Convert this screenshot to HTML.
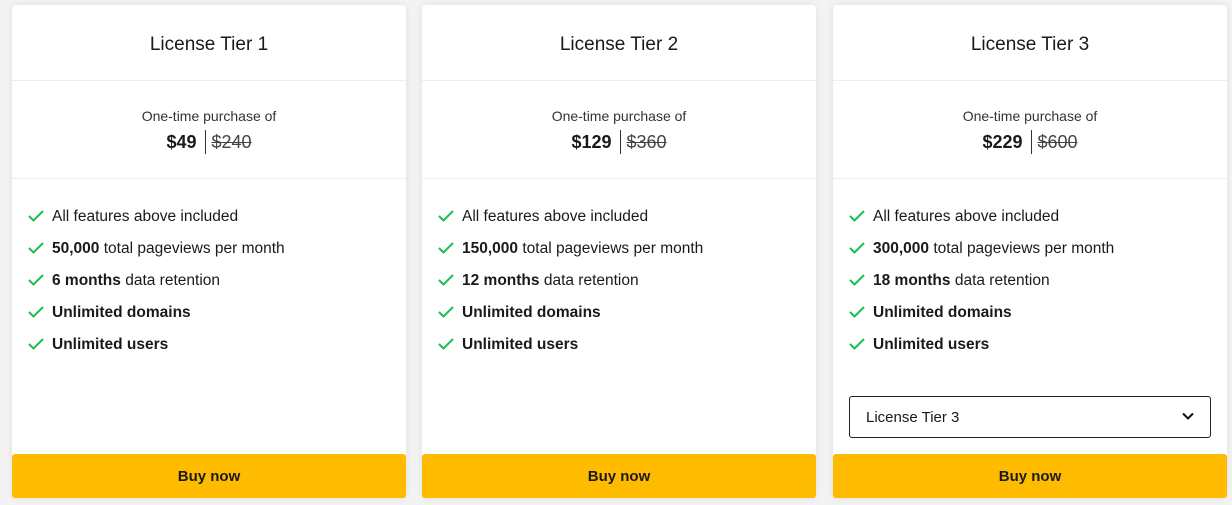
<!DOCTYPE html>
<html><head><style>
*{box-sizing:border-box;margin:0;padding:0}
body{width:1232px;height:505px;background:#f3f3f3;font-family:"Liberation Sans",sans-serif;color:#1a1a1a;position:relative;overflow:hidden}
.card{position:absolute;top:5px;height:493px;width:394px;background:#fff;border-radius:4px;box-shadow:0 0 8px rgba(0,0,0,.08)}
.h{height:76px;border-bottom:1px solid #eee;text-align:center;font-size:19px;line-height:80px;font-weight:500}
.p{height:98px;border-bottom:1px solid #eee;text-align:center;padding-top:27px}
.p .s{font-size:14px;color:#333;line-height:16px}
.p .v{margin-top:6px;font-size:18px;line-height:24px}
.p .v b{display:inline-block;padding-right:8px;border-right:1px solid #333;margin-right:6px}
.p .v del{color:#444}
ul{list-style:none;padding:26px 0 0 16px}
li{height:32px;font-size:15.5px;line-height:24px;display:flex;align-items:flex-start}
li svg{margin:4px 8px 0 0}
.btn{position:absolute;left:0;right:0;bottom:0;height:44px;background:#ffbb00;border-radius:3px;text-align:center;line-height:46px;font-weight:bold;font-size:15px}
.sel{position:absolute;left:16px;right:16px;top:391px;height:42px;border:1px solid #222;border-radius:3px;font-size:15px;line-height:41px;padding-left:16px}
.sel svg{position:absolute;right:16px;top:15px}
</style></head><body>
<div class="card" style="left:12px"><div class="h">License Tier 1</div><div class="p"><div class="s">One-time purchase of</div><div class="v"><b>$49</b><del>$240</del></div></div>
<ul><li><svg width="16" height="14" viewBox="0 0 16 14"><path d="M1 7l4.5 4.5L15 2" fill="none" stroke="#1cbd4c" stroke-width="2"/></svg>All features above included</li>
<li><svg width="16" height="14" viewBox="0 0 16 14"><path d="M1 7l4.5 4.5L15 2" fill="none" stroke="#1cbd4c" stroke-width="2"/></svg><span><b>50,000</b> total pageviews per month</span></li>
<li><svg width="16" height="14" viewBox="0 0 16 14"><path d="M1 7l4.5 4.5L15 2" fill="none" stroke="#1cbd4c" stroke-width="2"/></svg><span><b>6 months</b> data retention</span></li>
<li><svg width="16" height="14" viewBox="0 0 16 14"><path d="M1 7l4.5 4.5L15 2" fill="none" stroke="#1cbd4c" stroke-width="2"/></svg><b>Unlimited domains</b></li>
<li><svg width="16" height="14" viewBox="0 0 16 14"><path d="M1 7l4.5 4.5L15 2" fill="none" stroke="#1cbd4c" stroke-width="2"/></svg><b>Unlimited users</b></li></ul>
<div class="btn">Buy now</div></div>
<div class="card" style="left:422px"><div class="h">License Tier 2</div><div class="p"><div class="s">One-time purchase of</div><div class="v"><b>$129</b><del>$360</del></div></div>
<ul><li><svg width="16" height="14" viewBox="0 0 16 14"><path d="M1 7l4.5 4.5L15 2" fill="none" stroke="#1cbd4c" stroke-width="2"/></svg>All features above included</li>
<li><svg width="16" height="14" viewBox="0 0 16 14"><path d="M1 7l4.5 4.5L15 2" fill="none" stroke="#1cbd4c" stroke-width="2"/></svg><span><b>150,000</b> total pageviews per month</span></li>
<li><svg width="16" height="14" viewBox="0 0 16 14"><path d="M1 7l4.5 4.5L15 2" fill="none" stroke="#1cbd4c" stroke-width="2"/></svg><span><b>12 months</b> data retention</span></li>
<li><svg width="16" height="14" viewBox="0 0 16 14"><path d="M1 7l4.5 4.5L15 2" fill="none" stroke="#1cbd4c" stroke-width="2"/></svg><b>Unlimited domains</b></li>
<li><svg width="16" height="14" viewBox="0 0 16 14"><path d="M1 7l4.5 4.5L15 2" fill="none" stroke="#1cbd4c" stroke-width="2"/></svg><b>Unlimited users</b></li></ul>
<div class="btn">Buy now</div></div>
<div class="card" style="left:833px"><div class="h">License Tier 3</div><div class="p"><div class="s">One-time purchase of</div><div class="v"><b>$229</b><del>$600</del></div></div>
<ul><li><svg width="16" height="14" viewBox="0 0 16 14"><path d="M1 7l4.5 4.5L15 2" fill="none" stroke="#1cbd4c" stroke-width="2"/></svg>All features above included</li>
<li><svg width="16" height="14" viewBox="0 0 16 14"><path d="M1 7l4.5 4.5L15 2" fill="none" stroke="#1cbd4c" stroke-width="2"/></svg><span><b>300,000</b> total pageviews per month</span></li>
<li><svg width="16" height="14" viewBox="0 0 16 14"><path d="M1 7l4.5 4.5L15 2" fill="none" stroke="#1cbd4c" stroke-width="2"/></svg><span><b>18 months</b> data retention</span></li>
<li><svg width="16" height="14" viewBox="0 0 16 14"><path d="M1 7l4.5 4.5L15 2" fill="none" stroke="#1cbd4c" stroke-width="2"/></svg><b>Unlimited domains</b></li>
<li><svg width="16" height="14" viewBox="0 0 16 14"><path d="M1 7l4.5 4.5L15 2" fill="none" stroke="#1cbd4c" stroke-width="2"/></svg><b>Unlimited users</b></li></ul>
<div class="sel">License Tier 3<svg width="12" height="8" viewBox="0 0 12 8"><path d="M1 1.5l5 5 5-5" fill="none" stroke="#111" stroke-width="2"/></svg></div>
<div class="btn">Buy now</div></div>
</body></html>
